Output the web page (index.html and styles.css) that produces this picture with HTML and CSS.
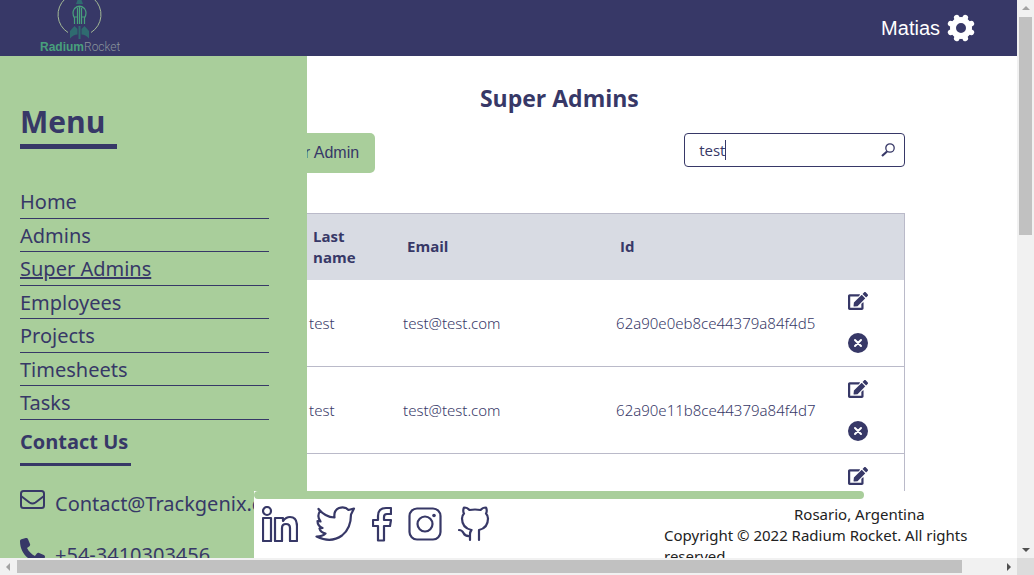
FILE: index.html
```html
<!DOCTYPE html>
<html lang="en">
<head>
<meta charset="utf-8">
<title>Super Admins</title>
<link rel="stylesheet" href="styles.css">
</head>
<body>
<svg class="sprite" aria-hidden="true">
  <symbol id="edit" viewBox="0 0 576 512"><path d="M402.6 83.2l90.2 90.2c3.8 3.8 3.8 10 0 13.8L274.4 405.6l-92.8 10.3c-12.4 1.4-22.9-9.1-21.5-21.5l10.3-92.8L388.8 83.2c3.8-3.8 10-3.8 13.8 0zm162-22.9l-48.8-48.8c-15.2-15.2-39.9-15.2-55.2 0l-35.4 35.4c-3.8 3.8-3.8 10 0 13.8l90.2 90.2c3.8 3.8 10 3.8 13.8 0l35.4-35.4c15.2-15.3 15.2-40 0-55.2zM384 346.2V448H64V128h229.8c3.2 0 6.2-1.3 8.5-3.5l40-40c7.6-7.6 2.2-20.5-8.5-20.5H48C21.5 64 0 85.5 0 112v352c0 26.5 21.5 48 48 48h352c26.5 0 48-21.5 48-48V306.2c0-10.7-12.9-16-20.5-8.5l-40 40c-2.2 2.3-3.5 5.3-3.5 8.5z"/></symbol>
  <symbol id="remove" viewBox="0 0 20 20"><circle cx="10" cy="10" r="10"/><path d="M7 7l6 6M13 7l-6 6" stroke="#fff" stroke-width="2" stroke-linecap="round"/></symbol>
</svg>
<div class="window">
  <div class="page">
    <header class="header">
      <a class="logo" href="#" aria-label="Radium Rocket">
        <svg viewBox="0 0 80 56" width="80" height="56">
          <path d="M28 32.500A21 21 0 0 1 25 -1M54 -1A21 21 0 0 1 51 32.500" fill="none" stroke="#a3b896" stroke-width="1"/>
          <path d="M37.500 0h4l1.500 4h-7zM34.500 26l3 3v5.500q-4 0-7.500 4v-7.500zM44.500 26l-3 3v5.500q4 0 7.500 4v-7.500zM38.500 26h2v13h-2z" fill="#2f6b70"/>
          <path d="M34.500 24v-6q-3-5 0-9.500 5-4.500 10 0 3 4.500 0 9.500v6M37.500 24V8M41.500 24V8M39.500 24V7M34.500 17h3M41.500 17h3" fill="none" stroke="#48a07c" stroke-width="1.200"/>
          <text class="logo-text" x="0" y="51"><tspan class="logo-bold">Radium</tspan><tspan class="logo-thin">Rocket</tspan></text>
        </svg>
      </a>
      <div class="user">
        <span>Matias</span>
        <button class="icon-button" type="button" aria-label="Settings">
          <svg class="gear" viewBox="0 0 28 28"><circle cx="14" cy="14" r="8" fill="none" stroke="#fff" stroke-width="6"/><path d="M9.700 3.600l1 2.600M18.300 3.600l-1 2.600M9.700 24.400l1-2.600M18.300 24.400l-1-2.600M3.600 9.700l2.600 1M3.600 18.300l2.600-1M24.400 9.700l-2.600 1M24.400 18.300l-2.600-1" stroke="#fff" stroke-width="5.600" stroke-linecap="round"/></svg>
        </button>
      </div>
    </header>
    <div class="stage">
      <main class="content">
        <h1 class="title">Super Admins</h1>
        <div class="tools">
          <button class="add" type="button">Add Super Admin</button>
          <label class="search">
            <input type="text" value="test" aria-label="Search">
            <span class="caret"></span>
            <svg viewBox="0 0 14 14" width="14" height="14"><circle cx="9" cy="5" r="4.200" fill="none" stroke="#373867" stroke-width="1.300"/><path d="M6 8.500L1 13" stroke="#373867" stroke-width="2.200"/></svg>
          </label>
        </div>
        <table class="table">
          <colgroup><col class="col-name"><col class="col-last"><col class="col-email"><col class="col-id"><col class="col-actions"></colgroup>
          <thead><tr><th>Name</th><th>Last name</th><th>Email</th><th>Id</th><th></th></tr></thead>
          <tbody>
            <tr><td>test</td><td>test</td><td>test@test.com</td><td>62a90e0eb8ce44379a84f4d5</td><td><div class="actions"><button class="icon-button" type="button" aria-label="Edit"><svg class="edit"><use href="#edit"/></svg></button><button class="icon-button" type="button" aria-label="Delete"><svg class="remove"><use href="#remove"/></svg></button></div></td></tr>
            <tr><td>test</td><td>test</td><td>test@test.com</td><td>62a90e11b8ce44379a84f4d7</td><td><div class="actions"><button class="icon-button" type="button" aria-label="Edit"><svg class="edit"><use href="#edit"/></svg></button><button class="icon-button" type="button" aria-label="Delete"><svg class="remove"><use href="#remove"/></svg></button></div></td></tr>
            <tr><td></td><td></td><td></td><td></td><td><div class="actions"><button class="icon-button" type="button" aria-label="Edit"><svg class="edit"><use href="#edit"/></svg></button><button class="icon-button" type="button" aria-label="Delete"><svg class="remove"><use href="#remove"/></svg></button></div></td></tr>
          </tbody>
        </table>
      </main>
      <aside class="sidebar">
        <h2 class="menu-title">Menu</h2>
        <nav class="menu">
          <a href="#">Home</a>
          <a href="#">Admins</a>
          <a class="current" href="#">Super Admins</a>
          <a href="#">Employees</a>
          <a href="#">Projects</a>
          <a href="#">Timesheets</a>
          <a href="#">Tasks</a>
        </nav>
        <h3 class="contact-title">Contact Us</h3>
        <div class="contact">
          <svg viewBox="0 0 25 25" width="25" height="25"><g fill="none" stroke="#373867" stroke-width="2"><rect x="1" y="4" width="23" height="17" rx="2.500"/><path d="M1 9l8.500 6.500q3 2 6 0L24 9"/></g></svg>
          <span>Contact@Trackgenix.com</span>
        </div>
        <div class="contact">
          <svg viewBox="0 0 512 512" width="25" height="25"><path fill="#373867" d="M164.900 24.600c-7.700-18.600-28-28.500-47.400-23.200l-88 24C12.100 30.200 0 46 0 64c0 247.400 200.600 448 448 448 18 0 33.800-12.100 38.600-29.500l24-88c5.300-19.400-4.600-39.700-23.200-47.400l-96-40c-16.300-6.800-35.200-2.100-46.300 11.600L304.700 368C234.300 334.700 177.300 277.700 144 207.300L193.300 167c13.700-11.200 18.400-30 11.600-46.300z"/></svg>
          <span>+54-3410303456</span>
        </div>
      </aside>
    </div>
    <footer class="footer">
      <div class="bar"></div>
      <div class="footer-body">
        <div class="social">
          <a href="#" aria-label="LinkedIn"><svg width="36" height="36" viewBox="0 0 36 36"><g><circle cx="5" cy="5" r="4"/><path d="M1 12h8v23H1zM13 12h8v3q3-4 7-4 7 0 7 9v15h-7V22q0-4-4-4t-4 4v13h-7z"/></g></svg></a>
          <a href="#" aria-label="Twitter"><svg width="42" height="36" viewBox="0 0 42 36"><path d="M4.500 3q6.500 8 16 8.500Q19.500 4.500 25 2q6-2 9.500 2l5.500-1.500-3 6q0 14-9 21-11 8-25.500 1 6 0 9-3-5-1-6-5l3-.5q-5-2-5-7l3 .5q-4-5-.5-10.500z"/></svg></a>
          <a href="#" aria-label="Facebook"><svg width="20" height="36" viewBox="0 0 20 36"><path d="M6 34.500V20H1v-6h5v-4q0-8 8-8h5v6h-4q-3 0-3 3v3h7l-1 6h-6v14.500z"/></svg></a>
          <a href="#" aria-label="Instagram"><svg width="34" height="36" viewBox="0 0 34 36"><rect x="1.500" y="2.500" width="31" height="31" rx="7.500"/><circle cx="17" cy="18" r="7.500"/><circle class="dot" cx="26" cy="9.500" r="1.800"/></svg></a>
          <a href="#" aria-label="GitHub"><svg width="32" height="36" viewBox="0 0 32 36"><path d="M1 24q3 0 4.500 3 1.500 3.500 6.500 3M12 34v-6q0-2 1.500-4Q4 22 4 12.500q0-3 2-5Q4.500 5 6 1.500q3.500 0 5.500 2.500 5.500-1 11 0 2-2.500 5.500-2.500 1.500 3.500 0 6 2 2 2 5 0 9.500-9 11.500V34"/></svg></a>
        </div>
        <div class="legal"><p class="place">Rosario, Argentina</p><p>Copyright © 2022 Radium Rocket. All rights reserved.</p></div>
      </div>
    </footer>
  </div>
  <div class="scroll-y"><i class="arrow up"></i><i class="thumb"></i><i class="arrow down"></i></div>
  <div class="scroll-x"><i class="arrow left"></i><i class="thumb"></i><i class="arrow right"></i></div>
</div>
</body>
</html>
```
FILE: styles.css
```css
* { box-sizing: border-box; }
body {
  margin: 0;
  color: #373867;
  font-family: "Open Sans", "Noto Sans", sans-serif;
  font-size: 15px;
}
h1, h2, h3, p { margin: 0; }
button, input { font: inherit; color: inherit; }
svg { display: block; }
.sprite { position: absolute; width: 0; height: 0; }
.icon-button { display: block; padding: 0; border: 0; background: none; cursor: pointer; }

.window {
  display: grid;
  grid-template: minmax(0, 1fr) 17px / minmax(0, 1fr) 17px;
  height: 100vh;
  background: #dcdcdc;
}
.page {
  position: relative;
  display: flex;
  flex-direction: column;
  overflow: hidden;
  background: #fff;
}

.header {
  display: flex;
  flex: none;
  align-items: center;
  justify-content: space-between;
  height: 56px;
  padding: 0 42px 0 40px;
  background: #373867;
}
.logo-text { font-size: 12px; }
.logo-bold { font-family: "Liberation Sans", sans-serif; font-weight: 700; fill: #48a07c; }
.logo-thin { font-family: Roboto, sans-serif; font-weight: 300; fill: #8a949c; }
.user {
  display: flex;
  align-items: center;
  gap: 7px;
  color: #fff;
  font: 20px "Liberation Sans", Arial, sans-serif;
}
.gear { width: 28px; height: 28px; }

.stage { position: relative; flex: 1; min-height: 0; }
.content { height: 100%; padding: 26px 11% 0 21%; overflow: hidden; }
.title { font-size: 23px; line-height: 32px; text-align: center; }
.tools {
  display: flex;
  align-items: flex-start;
  justify-content: space-between;
  margin: 19px 0 40px;
}
.add {
  height: 40px;
  padding: 0 16px 0 21px;
  border: 0;
  border-radius: 5px;
  background: #a9ce9b;
  font: 16px "Liberation Sans", Arial, sans-serif;
}
.search {
  display: flex;
  align-items: center;
  width: 221px;
  height: 34px;
  padding: 0 9px 0 14px;
  border: 1px solid #373867;
  border-radius: 4px;
}
.search input {
  field-sizing: content;
  padding: 0;
  border: 0;
  outline: 0;
  background: none;
}
.caret { width: 1px; height: 20px; background: #373867; }
.search svg { margin-left: auto; }

.table {
  width: 100%;
  border: 1px solid #babac9;
  border-collapse: collapse;
  table-layout: fixed;
}
.col-name { width: 91px; }
.col-last { width: 94px; }
.col-email { width: 213px; }
.col-id { width: 232px; }
.table th {
  height: 66px;
  padding: 0 20px 0 8px;
  background: #d8dbe3;
  line-height: 21px;
  text-align: left;
}
.table td { height: 87px; padding: 0 4px; border-bottom: 1px solid #babac9; font-family: "Noto Sans", sans-serif; font-weight: 300; }
.actions { display: flex; flex-direction: column; gap: 23px; }
.edit { width: 20px; height: 18px; fill: #373867; }
.remove { width: 20px; height: 20px; fill: #373867; }

.sidebar {
  position: absolute;
  inset: 0 auto 0 0;
  width: 307px;
  padding: 44px 38px 0 20px;
  overflow: hidden;
  background: #a9ce9b;
}
.menu-title {
  width: 97px;
  margin-bottom: 36px;
  border-bottom: 5px solid #373867;
  font-size: 30px;
  line-height: 44px;
}
.menu { display: flex; flex-direction: column; height: 235px; }
.menu a {
  flex: 1;
  min-height: 0;
  border-bottom: 1px solid #373867;
  color: inherit;
  font-family: "Noto Sans", sans-serif;
  font-size: 20px;
  line-height: 34px;
  text-decoration: none;
}
.menu .current { text-decoration: underline; }
.contact-title {
  width: 111px;
  margin-bottom: 21px;
  padding: 8px 0 7px;
  border-bottom: 3px solid #373867;
  font-size: 20px;
  line-height: 28px;
  white-space: nowrap;
}
.contact {
  display: flex;
  align-items: flex-start;
  gap: 10px;
  height: 51px;
  font-family: "Noto Sans", sans-serif;
  font-size: 20px;
  line-height: 34px;
}
.contact svg { flex: none; }

.footer {
  position: absolute;
  bottom: 0;
  right: 0;
  width: 75%;
  height: 67px;
  overflow: hidden;
  background: #fff;
}
.bar { width: 80%; height: 8px; border-radius: 4px; background: #a9ce9b; }
.footer-body { display: flex; justify-content: space-between; padding: 5px 26px 0 8px; }
.social { display: flex; align-items: center; gap: 16px; height: 40px; }
.social svg { fill: none; stroke: #373867; stroke-width: 2.200; stroke-linejoin: round; stroke-linecap: round; }
.social .dot { fill: #373867; stroke: none; }
.legal { width: 327px; color: #222; font-family: "Noto Sans", sans-serif; line-height: 21px; }
.place { padding-left: 130px; }

.scroll-x, .scroll-y { display: flex; align-items: center; justify-content: space-between; background: #f1f1f1; }
.scroll-y { grid-area: 1 / 2; flex-direction: column; padding: 6px 0; }
.scroll-x { grid-area: 2 / 1; padding: 0 6px; }
.thumb { background: #c1c1c1; }
.scroll-y .thumb { width: 13px; height: 40%; margin: 7px 0 auto; }
.scroll-x .thumb { width: 94%; height: 13px; margin: 0 auto 0 7px; }
.arrow { border: 4px solid transparent; }
.up { border-top: 0; border-bottom-color: #a3a3a3; }
.down { border-bottom: 0; border-top-color: #505050; }
.left { border-left: 0; border-right-color: #a3a3a3; }
.right { border-right: 0; border-left-color: #505050; }
```
